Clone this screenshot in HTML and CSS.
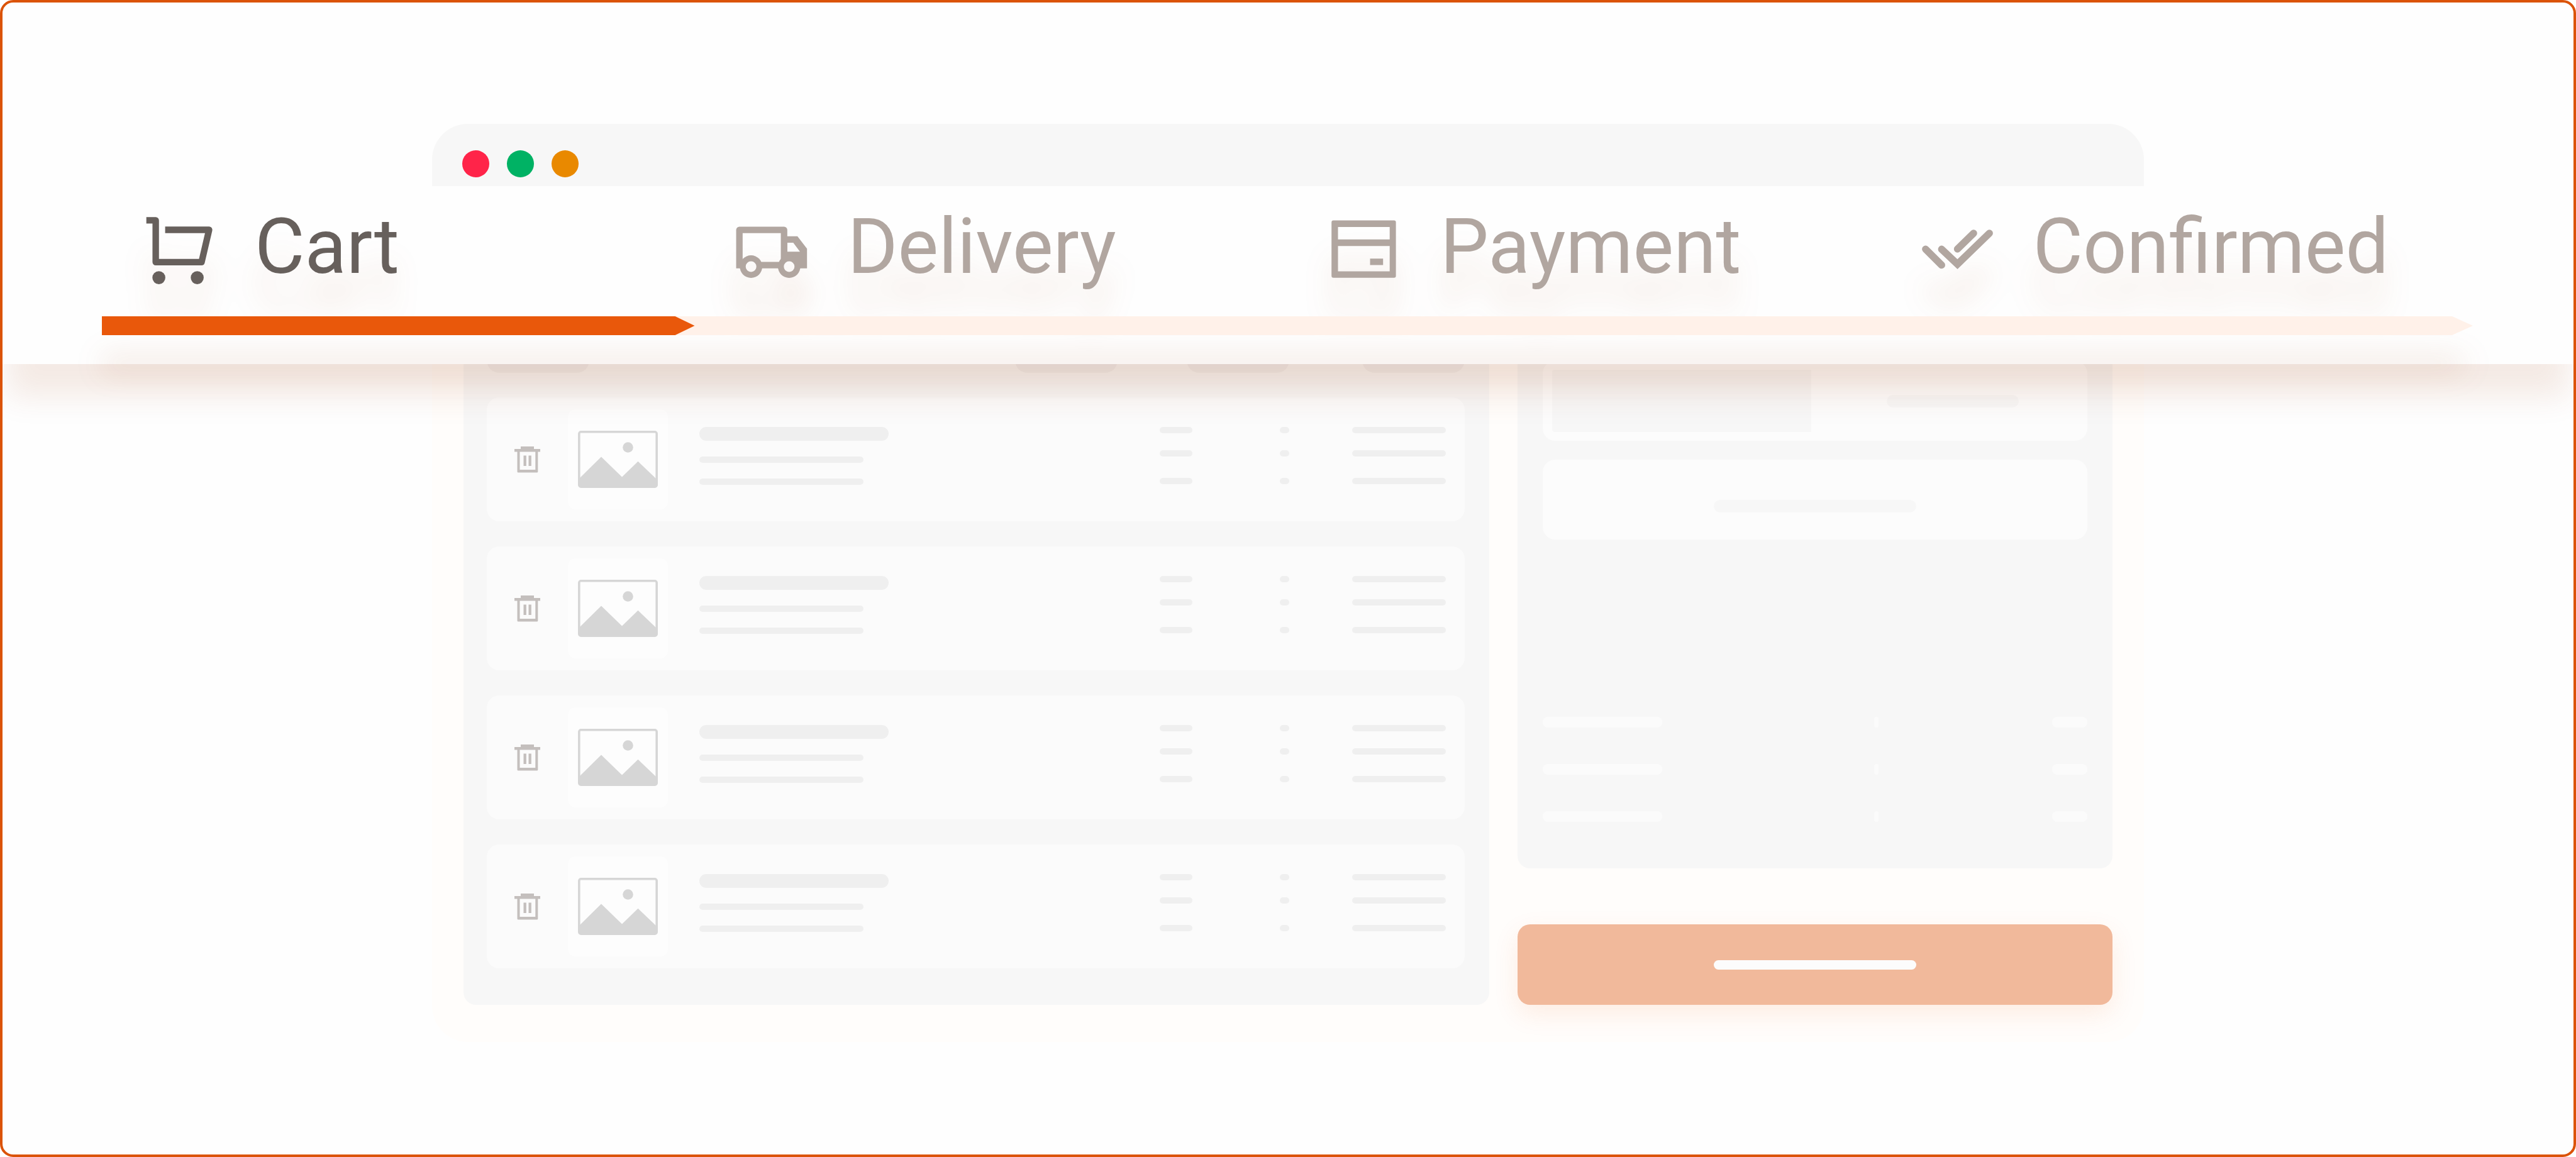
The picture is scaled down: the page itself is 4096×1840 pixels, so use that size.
FILE: index.html
```html
<!DOCTYPE html>
<html lang="en">
<head>
  <meta charset="utf-8">
  <meta name="viewport" content="width=device-width, initial-scale=1">
  <title>Checkout progress</title>
  <link rel="stylesheet" href="styles.css">
</head>
<body>
  <svg class="sprite" aria-hidden="true">
    <symbol id="icon-trash" viewBox="0 0 41 42">
      <path fill="currentColor" fill-rule="evenodd" d="M10 0H31V4H41V8.500H37.300V40a1.500 1.500 0 0 1-1.500 1.500H6a1.500 1.500 0 0 1-1.500-1.500V8.500H0V4H10ZM8.500 8.500V37H33.300V8.500ZM14.500 14.500H18.800V31H14.500ZM22.500 14.500H26.800V31H22.500Z"/>
    </symbol>
    <symbol id="icon-picture" viewBox="0 0 127 91">
      <rect x="1.800" y="1.800" width="123.400" height="87.400" rx="3" fill="none" stroke="currentColor" stroke-width="3.600"/>
      <circle cx="79.500" cy="26.500" r="8.300" fill="currentColor"/>
      <path fill="currentColor" d="M2 76 37 41.500 70 73.500 95.500 48.700 125 77V89H2Z"/>
    </symbol>
  </svg>

  <main class="scene">
    <section class="window" aria-label="Shop preview">
      <div class="titlebar">
        <span class="dot dot-red"></span>
        <span class="dot dot-green"></span>
        <span class="dot dot-amber"></span>
      </div>
      <div class="shop">
        <div class="panel basket">
          <div class="basket-head">
            <span class="chip"></span><span class="chip"></span><span class="chip"></span><span class="chip"></span>
          </div>
          <ul class="items">
            <li class="item">
              <button class="remove" type="button" aria-label="Remove item"><svg><use href="#icon-trash"/></svg></button>
              <span class="thumb"><svg><use href="#icon-picture"/></svg></span>
              <span class="text-lines"><i class="title-line"></i><i></i><i></i></span>
              <span class="value-lines narrow"><i></i><i></i><i></i></span>
              <span class="value-lines tiny"><i></i><i></i><i></i></span>
              <span class="value-lines"><i></i><i></i><i></i></span>
            </li>
            <li class="item">
              <button class="remove" type="button" aria-label="Remove item"><svg><use href="#icon-trash"/></svg></button>
              <span class="thumb"><svg><use href="#icon-picture"/></svg></span>
              <span class="text-lines"><i class="title-line"></i><i></i><i></i></span>
              <span class="value-lines narrow"><i></i><i></i><i></i></span>
              <span class="value-lines tiny"><i></i><i></i><i></i></span>
              <span class="value-lines"><i></i><i></i><i></i></span>
            </li>
            <li class="item">
              <button class="remove" type="button" aria-label="Remove item"><svg><use href="#icon-trash"/></svg></button>
              <span class="thumb"><svg><use href="#icon-picture"/></svg></span>
              <span class="text-lines"><i class="title-line"></i><i></i><i></i></span>
              <span class="value-lines narrow"><i></i><i></i><i></i></span>
              <span class="value-lines tiny"><i></i><i></i><i></i></span>
              <span class="value-lines"><i></i><i></i><i></i></span>
            </li>
            <li class="item">
              <button class="remove" type="button" aria-label="Remove item"><svg><use href="#icon-trash"/></svg></button>
              <span class="thumb"><svg><use href="#icon-picture"/></svg></span>
              <span class="text-lines"><i class="title-line"></i><i></i><i></i></span>
              <span class="value-lines narrow"><i></i><i></i><i></i></span>
              <span class="value-lines tiny"><i></i><i></i><i></i></span>
              <span class="value-lines"><i></i><i></i><i></i></span>
            </li>
          </ul>
        </div>

        <div class="side">
          <div class="panel summary">
            <div class="card coupon">
              <span class="coupon-field"></span>
              <span class="coupon-action"><i></i></span>
            </div>
            <div class="card note"><i></i></div>
            <div class="totals">
              <div class="total"><i class="name"></i><i class="mark"></i><i class="sum"></i></div>
              <div class="total"><i class="name"></i><i class="mark"></i><i class="sum"></i></div>
              <div class="total"><i class="name"></i><i class="mark"></i><i class="sum"></i></div>
            </div>
          </div>
          <button class="checkout" type="button" aria-label="Continue to delivery"><span></span></button>
        </div>
      </div>
    </section>

    <section class="stepper" aria-label="Checkout steps">
      <div class="stepper-body">
        <ol class="steps">
          <li class="step is-current" aria-current="step">
            <svg class="step-icon" viewBox="0 0 123 123" aria-hidden="true">
              <path fill="none" stroke="currentColor" stroke-width="10.300" stroke-linejoin="round" d="M10.700 10.400H25.600V76.800H98.500L110.500 25.500H40.600"/>
              <circle cx="30.600" cy="101.600" r="10.300" fill="currentColor"/>
              <circle cx="91.600" cy="101.600" r="10.300" fill="currentColor"/>
            </svg>
            <span class="step-label">Cart</span>
          </li>
          <li class="step">
            <svg class="step-icon" viewBox="0 0 123 123" aria-hidden="true">
              <mask id="wheel-hubs">
                <rect width="123" height="123" fill="#fff"/>
                <circle cx="29.200" cy="84" r="8.500" fill="#000"/>
                <circle cx="89.800" cy="84" r="8.500" fill="#000"/>
              </mask>
              <g mask="url(#wheel-hubs)">
                <path fill="none" stroke="currentColor" stroke-width="10.300" stroke-linejoin="round" d="M10.700 86.800V25.600H81.700V81.600H30"/>
                <path fill="currentColor" fill-rule="evenodd" d="M82 35.800H103L118.200 55.400V86.800H82ZM86.800 46.100V60.200H107L96.300 46.100Z"/>
                <circle cx="29.200" cy="84" r="17.900" fill="currentColor"/>
                <circle cx="89.800" cy="84" r="17.900" fill="currentColor"/>
              </g>
            </svg>
            <span class="step-label">Delivery</span>
          </li>
          <li class="step">
            <svg class="step-icon" viewBox="0 0 123 123" aria-hidden="true">
              <path fill="currentColor" fill-rule="evenodd" d="M13.200 10.600H109.600a3 3 0 0 1 3 3V98.700a3 3 0 0 1-3 3H13.200a3 3 0 0 1-3-3V13.600a3 3 0 0 1 3-3ZM20.500 21V40.800H102.700V21ZM20.500 51.200V91.500H102.700V51.200ZM71.500 71.300H92.200V81.600H71.500Z"/>
            </svg>
            <span class="step-label">Payment</span>
          </li>
          <li class="step">
            <svg class="step-icon" viewBox="0 0 123 123" aria-hidden="true">
              <path fill="none" stroke="currentColor" stroke-width="11.400" stroke-linecap="round" d="M11.800 56.300 37.300 81.600M37.300 56.300 62.500 80.200 113.200 31M88.100 31 62.500 56"/>
            </svg>
            <span class="step-label">Confirmed</span>
          </li>
        </ol>
        <div class="track" role="progressbar" aria-label="Checkout progress" aria-valuemin="0" aria-valuemax="100" aria-valuenow="25">
          <div class="fill" style="width: 25%"></div>
        </div>
      </div>
    </section>
  </main>
</body>
</html>
```
FILE: styles.css
```css
:root {
  --paper: #fefefe;
  --panel: #f7f7f7;
  --card: #fcfcfc;
  --line: #efefef;
  --shade: rgba(154, 56, 14, 0.1);
}

* {
  box-sizing: border-box;
}

body {
  margin: 0;
  background: #fff;
  font-family: Roboto, "Liberation Sans", sans-serif;
}

i {
  display: block;
}

ul,
ol {
  margin: 0;
  padding: 0;
  list-style: none;
}

button {
  padding: 0;
  border: 0;
  background: none;
  font: inherit;
}

.sprite {
  display: none;
}

/* The preview window and the stepper share one cell, the stepper on top. */
.scene {
  display: grid;
  grid-template-columns: minmax(0, 1fr);
  align-items: start;
  min-height: 100vh;
  overflow: hidden;
  border: 4px solid #db5309;
  border-radius: 21px;
  background: var(--paper);
}

.window,
.stepper {
  grid-area: 1 / 1;
}

/* Preview window */
.window {
  margin: 193px 683px 179px;
  overflow: hidden;
  border-radius: 57px;
  background: #fffdfb;
}

.titlebar {
  display: flex;
  gap: 28px;
  padding: 42px 48px 14px;
  background: var(--panel);
}

.dot {
  width: 43px;
  height: 43px;
  border-radius: 50%;
}

.dot-red { background: #ff2449; }
.dot-green { background: #00b264; }
.dot-amber { background: #e98900; }

.shop {
  display: grid;
  grid-template-columns: minmax(0, 1631fr) minmax(0, 946fr);
  gap: 45px;
  padding: 238px 50px 59px;
}

.panel {
  border-radius: 20px;
  background: var(--panel);
}

/* Basket */
.basket {
  padding: 19px 39px 58px 37px;
}

.basket-head {
  display: grid;
  grid-template-columns: 1fr 273px 279px 163px;
  margin-bottom: 39px;
}

.chip {
  width: 163px;
  height: 40px;
  border-radius: 20px;
  background: var(--line);
}

.items {
  display: grid;
  gap: 40px;
}

.item {
  display: grid;
  grid-template-columns: 85px 209px 1fr 191px 115px 149px;
  align-items: center;
  height: 197px;
  padding: 0 30px 0 44px;
  border-radius: 20px;
  background: #fbfbfb;
}

.remove {
  width: 41px;
  height: 42px;
  color: #c4bfbd;
}

.remove svg {
  display: block;
  width: 41px;
  height: 42px;
}

.thumb {
  display: grid;
  place-items: center;
  width: 159px;
  height: 159px;
  border-radius: 12px;
  background: #fdfdfd;
  color: #d6d6d6;
}

.thumb svg {
  width: 127px;
  height: 91px;
}

.text-lines,
.value-lines {
  display: grid;
  align-self: start;
  padding-top: 47px;
}

.text-lines {
  gap: 25px;
}

.value-lines {
  grid-template-rows: 37px 44px 10px;
}

.text-lines i,
.value-lines i {
  height: 10px;
  border-radius: 5px;
  background: var(--line);
}

.text-lines i {
  width: 261px;
}

.text-lines .title-line {
  width: 301px;
  height: 22px;
  border-radius: 11px;
}

.narrow i {
  width: 52px;
}

.tiny i {
  width: 15px;
}

/* Order summary */
.side {
  display: flex;
  flex-direction: column;
  gap: 89px;
}

.summary {
  display: flex;
  flex: 1;
  flex-direction: column;
  gap: 30px;
  padding: 40px 40px 74px;
}

.card {
  height: 127px;
  border-radius: 20px;
  background: var(--card);
}

.coupon {
  display: grid;
  grid-template-columns: 412px 1fr;
  padding: 14px 0 14px 15px;
}

.coupon-field {
  border-radius: 4px 0 0 4px;
  background: var(--panel);
}

.coupon-action {
  display: grid;
  place-items: center;
  padding-left: 10px;
}

.coupon-action i {
  width: 210px;
  height: 20px;
  border-radius: 10px;
  background: var(--panel);
}

.note {
  display: grid;
  place-items: center;
  padding-top: 20px;
}

.note i {
  width: 322px;
  height: 20px;
  border-radius: 10px;
  background: var(--panel);
}

.totals {
  display: grid;
  gap: 58px;
  margin-top: auto;
}

.total {
  display: grid;
  grid-template-columns: 1fr 283px 56px;
  height: 17px;
}

.total i {
  border-radius: 8px;
  background: #fbfbfb;
}

.name { width: 190px; }
.mark { width: 7px; }

.checkout {
  display: grid;
  place-items: center;
  height: 128px;
  border-radius: 20px;
  background: #f1b99b;
  box-shadow: 0 14px 40px rgba(234, 88, 12, 0.1);
}

.checkout span {
  width: 322px;
  height: 15px;
  border-radius: 8px;
  background: var(--card);
}

/* Stepper */
.stepper {
  margin-top: 292px;
  padding: 44px 160px 46px 158px;
  background: var(--paper);
  box-shadow: 0 60px 46px -8px var(--shade);
}

.stepper-body {
  filter: drop-shadow(0 60px 22px var(--shade));
}

.steps {
  display: grid;
  grid-template-columns: repeat(4, minmax(0, 1fr));
  margin-bottom: 40px;
}

.step {
  display: flex;
  gap: 60px;
  padding-left: 60px;
  color: #b1a6a0;
}

.step.is-current {
  color: #67605c;
}

.step-icon {
  flex: none;
  width: 123px;
  height: 123px;
}

.step-label {
  font-size: 122px;
  line-height: 106px;
}

.track {
  height: 30px;
  background: #fff1e9;
  clip-path: polygon(0 0, calc(100% - 33px) 0, 100% 50%, calc(100% - 33px) 100%, 0 100%);
}

.fill {
  height: 100%;
  background: #e9580b;
  clip-path: polygon(0 0, calc(100% - 31px) 0, 100% 50%, calc(100% - 31px) 100%, 0 100%);
}
```
